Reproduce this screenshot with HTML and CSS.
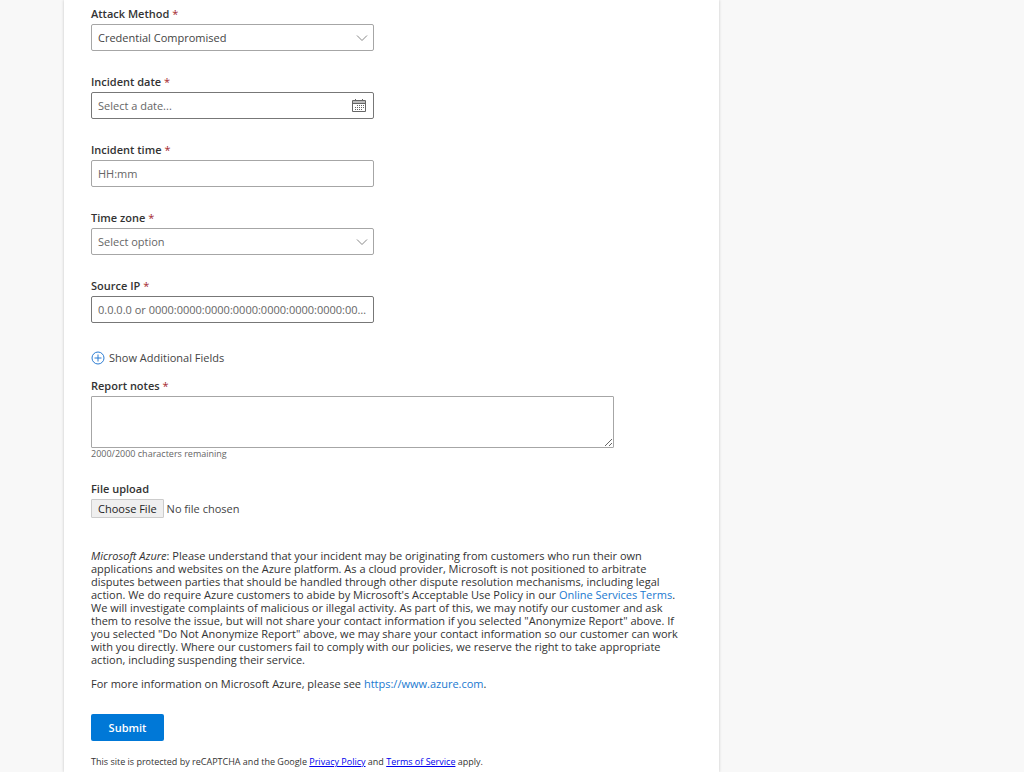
FILE: index.html
```
<!DOCTYPE html>
<html lang="en">
  <head>
    <meta charset="UTF-8" />
    <meta name="viewport" content="width=device-width, initial-scale=1" />
    <title>Report abuse</title>
    <link rel="stylesheet" href="styles.css">
  </head>
  <body>
    <main class="card">
      <form class="report-form">
        <div class="field">
          <label for="attack-method">Attack Method <span class="required">*</span></label>
          <div class="control">
            <select id="attack-method">
              <option>Credential Compromised</option>
            </select>
            <svg class="chevron" viewBox="0 0 12 8" aria-hidden="true">
              <path d="M1 1.5 L6 6.5 L11 1.5" />
            </svg>
          </div>
        </div>

        <div class="field">
          <label for="incident-date">Incident date <span class="required">*</span></label>
          <div class="control">
            <input class="dark" type="text" id="incident-date" placeholder="Select a date..." />
            <svg class="calendar" viewBox="0 0 14 14" aria-hidden="true">
              <path class="calendar-head" d="M1 2h12v2H1z" />
              <path d="M.5 1.5h13v11H.5zM.5 4.5h13M3.5 0v2M10.5 0v2" />
              <path class="calendar-days" d="M5 6.5h7M3 8.5h9M3 10.5h7" />
            </svg>
          </div>
        </div>

        <div class="field">
          <label for="incident-time">Incident time <span class="required">*</span></label>
          <div class="control">
            <input type="text" id="incident-time" placeholder="HH:mm" />
          </div>
        </div>

        <div class="field">
          <label for="time-zone">Time zone <span class="required">*</span></label>
          <div class="control">
            <select class="empty" id="time-zone">
              <option>Select option</option>
            </select>
            <svg class="chevron" viewBox="0 0 12 8" aria-hidden="true">
              <path d="M1 1.5 L6 6.5 L11 1.5" />
            </svg>
          </div>
        </div>

        <div class="field">
          <label for="source-ip">Source IP <span class="required">*</span></label>
          <div class="control">
            <input class="dark" type="text" id="source-ip" placeholder="0.0.0.0 or 0000:0000:0000:0000:0000:0000:0000:0000" />
          </div>
        </div>

        <button class="show-more" type="button">
          <svg viewBox="0 0 14 14" aria-hidden="true">
            <circle cx="7" cy="7" r="6" />
            <path d="M7 3.5v7M3.5 7h7" />
          </svg>
          Show Additional Fields
        </button>

        <div class="notes">
          <label for="report-notes">Report notes <span class="required">*</span></label>
          <textarea id="report-notes" maxlength="2000"></textarea>
          <p class="remaining">2000/2000 characters remaining</p>
        </div>

        <div class="upload">
          <label for="file-upload">File upload</label>
          <input type="file" id="file-upload" />
        </div>

        <div class="legal">
          <p>
            <em>Microsoft Azure</em>: Please understand that your incident may be originating from customers who run their own
            applications and websites on the Azure platform. As a cloud provider, Microsoft is not positioned to arbitrate
            disputes between parties that should be handled through other dispute resolution mechanisms, including legal
            action. We do require Azure customers to abide by Microsoft's Acceptable Use Policy in our <a href="#">Online Services Terms</a>.
            We will investigate complaints of malicious or illegal activity. As part of this, we may notify our customer and ask
            them to resolve the issue, but will not share your contact information if you selected "Anonymize Report" above. If
            you selected "Do Not Anonymize Report" above, we may share your contact information so our customer can work
            with you directly. Where our customers fail to comply with our policies, we reserve the right to take appropriate
            action, including suspending their service.
          </p>
          <p>For more information on Microsoft Azure, please see <a href="https://www.azure.com">https://www.azure.com</a>.</p>
        </div>

        <button class="submit" type="submit">Submit</button>

        <p class="captcha">
          This site is protected by reCAPTCHA and the Google
          <a href="#">Privacy Policy</a> and <a href="#">Terms of Service</a> apply.
        </p>
      </form>
    </main>
  </body>
</html>
```
FILE: styles.css
```
* {
  box-sizing: border-box;
}

body {
  margin: 0;
  background: #f8f8f8;
  color: #333;
  font-family: "Segoe UI", "Open Sans", "Noto Sans", sans-serif;
  font-size: 11px;
  line-height: 16px;
}

p {
  margin: 0;
}

input,
select,
textarea,
button {
  font: inherit;
}

/* White page column */
.card {
  width: 64%;
  min-height: 100vh;
  margin-left: 6.25%;
  padding: 6px 27px 4px;
  background: #fff;
  box-shadow: 0 0 3px rgba(0, 0, 0, 0.2);
}

.report-form {
  display: flex;
  flex-direction: column;
  align-items: flex-start;
}

label {
  display: block;
  margin-bottom: 2px;
  font-weight: 600;
}

.required {
  color: #a4262c;
  font-weight: 400;
}

/* Single line fields */
.field {
  width: 47%;
  margin-bottom: 23px;
}

.control {
  display: grid;
  align-items: center;
}

.control > * {
  grid-area: 1 / 1;
}

.control input,
.control select {
  width: 100%;
  height: 27px;
  padding: 0 6px;
  border: 1px solid #a6a6a6;
  border-radius: 2px;
  background: #fff;
  color: #444;
  appearance: none;
  text-overflow: ellipsis;
}

.control .dark {
  border-color: #777;
}

.control .empty,
.control input::placeholder {
  color: #666;
}

.control svg {
  justify-self: end;
  fill: none;
  stroke: #666;
  pointer-events: none;
}

.control .chevron {
  width: 12px;
  height: 8px;
  margin-right: 6px;
  stroke: #888;
}

.calendar {
  width: 14px;
  height: 14px;
  margin-right: 8px;
}

.calendar .calendar-head {
  fill: #bbb;
  stroke: none;
}

.calendar .calendar-days {
  stroke-dasharray: 1 1;
}

.show-more {
  display: flex;
  align-items: center;
  gap: 4px;
  margin: 4px 0 12px;
  padding: 0;
  border: 0;
  background: none;
  color: #444;
}

.show-more svg {
  width: 14px;
  height: 14px;
  fill: none;
  stroke: #2b7cd3;
}

/* Report notes */
.notes {
  width: 87%;
}

.notes textarea {
  display: block;
  width: 100%;
  height: 52px;
  border: 1px solid #a6a6a6;
  border-radius: 1px;
}

.remaining {
  color: #666;
  font-size: 9px;
  line-height: 12px;
}

.upload {
  margin: 21px 0 31px;
}

.upload input {
  display: block;
  height: 19px;
  color: #444;
  line-height: 17px;
}

.upload input::file-selector-button {
  height: 19px;
  margin: 0 3px 0 0;
  padding: 0 6px;
  border: 1px solid #ccc;
  border-radius: 1px;
  background: #efefef;
  color: #222;
  font: inherit;
}

/* Legal text */
.legal {
  width: 98%;
  line-height: 13px;
}

.legal p + p {
  margin-top: 11px;
}

.legal a {
  color: #1a79d0;
  text-decoration: none;
}

.submit {
  width: 73px;
  height: 27px;
  margin: 24px 0 15px;
  padding: 0;
  border: 0;
  border-radius: 2px;
  background: #0078d7;
  color: #fff;
  font-weight: 600;
}

.captcha {
  font-size: 9px;
  line-height: 12px;
}

.captcha a {
  color: #0000ee;
}
```
